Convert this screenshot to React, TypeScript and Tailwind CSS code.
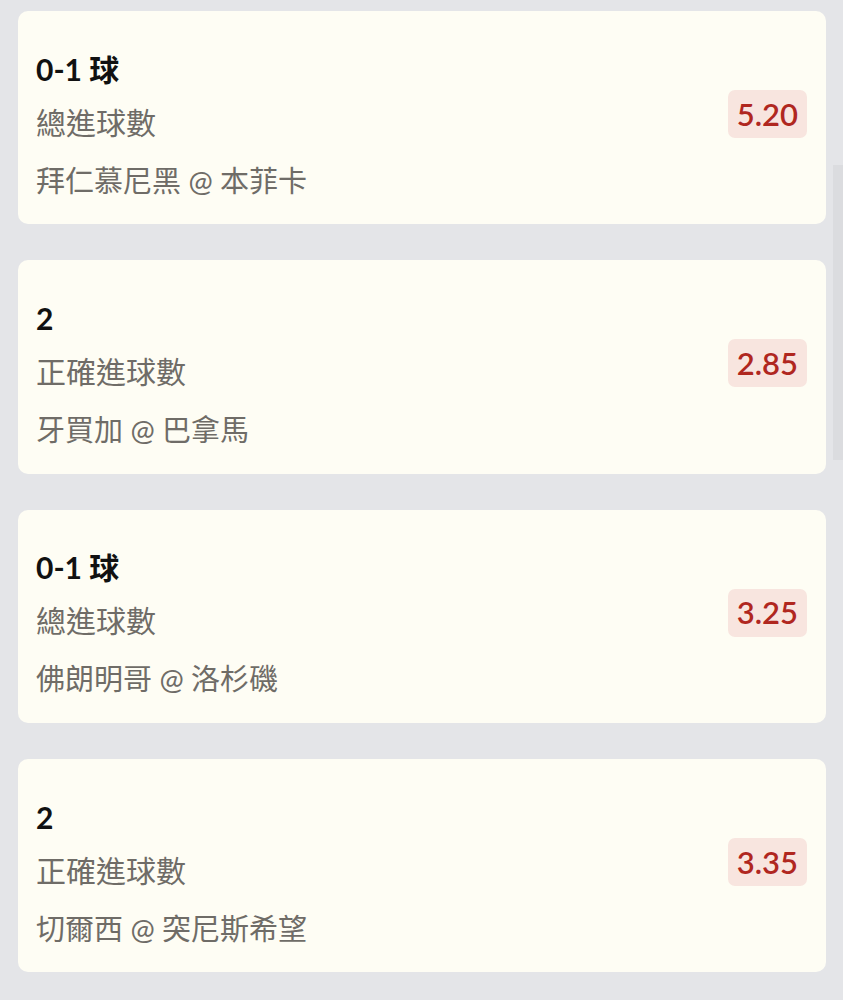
import React from "react";

type Bet = { sel: string; market: string; match: string; odds: string };

const bets: Bet[] = [
  { sel: "0-1 球", market: "總進球數", match: "拜仁慕尼黑 @ 本菲卡", odds: "5.20" },
  { sel: "2", market: "正確進球數", match: "牙買加 @ 巴拿馬", odds: "2.85" },
  { sel: "0-1 球", market: "總進球數", match: "佛朗明哥 @ 洛杉磯", odds: "3.25" },
  { sel: "2", market: "正確進球數", match: "切爾西 @ 突尼斯希望", odds: "3.35" },
];

export default function App() {
  return (
    <div
      className="relative w-[843px] h-[1000px] overflow-hidden bg-[#e4e5e8]"
      style={{ fontFamily: "Lato, 'Noto Sans CJK TC', sans-serif" }}
    >
      <div className="flex flex-col gap-[36px] pt-[11px] pl-[18px] pr-[17px]">
        {bets.map((b, i) => (
          <div
            key={i}
            className="h-[213.3px] rounded-[10px] bg-[#fefdf4] flex items-center justify-between pl-[18px] pr-[19px]"
          >
            <div className="flex flex-col pt-[14px]">
              <div className="text-[30px] leading-[50px] font-bold text-[#111111]">{b.sel}</div>
              <div className="text-[30px] leading-[50px] mt-[3px] text-[#6f6c67]">{b.market}</div>
              <div className="text-[29px] leading-[50px] mt-[9px] text-[#6f6c67]">{b.match}</div>
            </div>
            <div className="h-[48px] rounded-[7px] bg-[#f8e5df] px-[9px] flex items-center text-[31px] font-semibold text-[#b0271f] mb-[7px]">
              {b.odds}
            </div>
          </div>
        ))}
      </div>
      <div className="absolute right-0 top-[165px] w-[10px] h-[295px] bg-[#dbdcdf]" />
    </div>
  );
}
